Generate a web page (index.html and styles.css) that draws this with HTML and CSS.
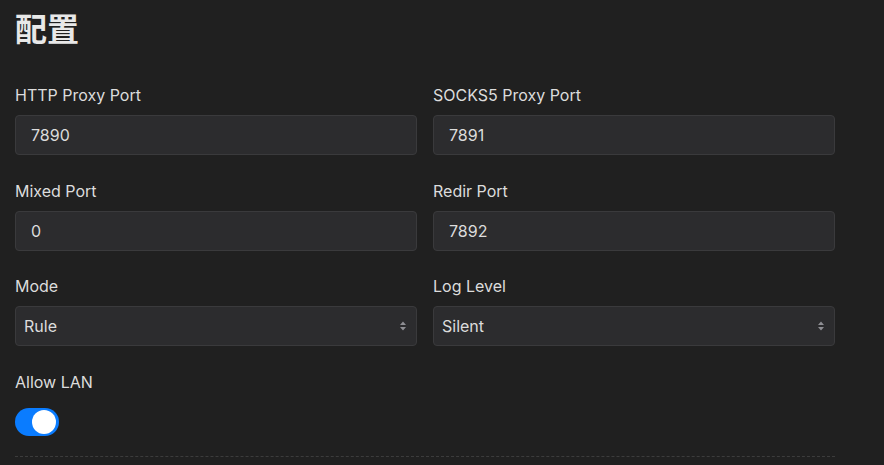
FILE: index.html
```html
<!DOCTYPE html>
<html lang="zh">
<head>
<meta charset="utf-8">
<link rel="stylesheet" href="styles.css">
</head>
<body>
<main class="page">
  <h1 class="title">配置</h1>
  <div class="grid">
    <div class="field">
      <label class="label">HTTP Proxy Port</label>
      <div class="input">7890</div>
    </div>
    <div class="field">
      <label class="label">SOCKS5 Proxy Port</label>
      <div class="input">7891</div>
    </div>
    <div class="field">
      <label class="label">Mixed Port</label>
      <div class="input">0</div>
    </div>
    <div class="field">
      <label class="label">Redir Port</label>
      <div class="input">7892</div>
    </div>
    <div class="field">
      <label class="label">Mode</label>
      <div class="input select"><span class="sel-text">Rule</span>
        <svg class="arrows" width="6" height="10" viewBox="0 0 6 10"><path d="M3 0.5L6 4H0Z M3 9.5L6 6H0Z" fill="#8e8e93"/></svg>
      </div>
    </div>
    <div class="field">
      <label class="label">Log Level</label>
      <div class="input select"><span class="sel-text">Silent</span>
        <svg class="arrows" width="6" height="10" viewBox="0 0 6 10"><path d="M3 0.5L6 4H0Z M3 9.5L6 6H0Z" fill="#8e8e93"/></svg>
      </div>
    </div>
    <div class="field">
      <label class="label">Allow LAN</label>
      <div class="toggle"><span class="knob"></span></div>
    </div>
  </div>
  <div class="divider"></div>
</main>
</body>
</html>
```
FILE: styles.css
```css
html, body {
  margin: 0;
  padding: 0;
  background: #202020;
}
body {
  font-family: Inter, "Noto Sans CJK SC", sans-serif;
  color: #dddddd;
}
.page {
  padding: 0 15px;
  width: 820px;
}
.title {
  margin: 0;
  padding-top: 8px;
  height: 62px;
  font-size: 32px;
  line-height: 38px;
  font-weight: 700;
  color: #e8e8e8;
  font-family: "Noto Sans CJK SC", sans-serif;
}
.grid {
  margin-top: 15px;
  display: grid;
  grid-template-columns: 1fr 1fr;
  column-gap: 16px;
  row-gap: 25.5px;
}
.field {
  display: flex;
  flex-direction: column;
}
.label {
  font-size: 16px;
  line-height: 20px;
  margin-bottom: 10px;
  color: #dcdcdc;
}
.input {
  box-sizing: border-box;
  height: 40px;
  border: 1px solid #3a3a3c;
  border-radius: 4px;
  background: #2c2c2e;
  padding: 0 15px;
  display: flex;
  align-items: center;
  font-size: 16px;
  color: #dcdcdc;
}
.select {
  padding: 0 10px 0 8px;
  justify-content: space-between;
}
.sel-text { flex: 1; }
.toggle {
  margin-top: 6px;
  width: 44px;
  height: 28px;
  border-radius: 14px;
  background: #0a7cff;
  position: relative;
}
.knob {
  position: absolute;
  right: 3px;
  top: 2px;
  width: 24px;
  height: 24px;
  border-radius: 50%;
  background: #ffffff;
}
.divider {
  margin-top: 20px;
  border-top: 1px dashed #3c3c3c;
}
```
